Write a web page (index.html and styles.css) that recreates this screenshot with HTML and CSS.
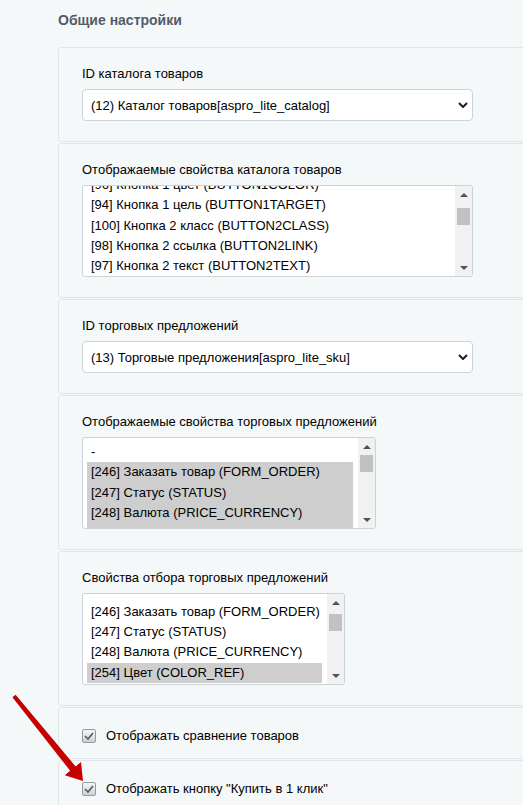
FILE: index.html
```html
<!DOCTYPE html>
<html lang="ru">
<head>
    <meta charset="UTF-8">
    <meta name="viewport" content="width=device-width, initial-scale=1.0">
    <title>Общие настройки</title>
    <link rel="stylesheet" href="styles.css">
</head>
<body>
    <div class="page">
        <h2 class="group-title">Общие настройки</h2>

        <!-- Catalog ID -->
        <div class="section">
            <div class="field-label">ID каталога товаров</div>
            <div class="select">
                <span>(12) Каталог товаров[aspro_lite_catalog]</span>
                <svg class="chevron" width="10" height="6" viewBox="0 0 10 6"><polyline points="1,1 5,5 9,1" /></svg>
            </div>
        </div>

        <!-- Catalog properties -->
        <div class="section">
            <div class="field-label">Отображаемые свойства каталога товаров</div>
            <div class="listbox wide">
                <div class="options">
                    <div class="rows scrolled-catalog">
                        <div class="opt">[96] Кнопка 1 цвет (BUTTON1COLOR)</div>
                        <div class="opt">[94] Кнопка 1 цель (BUTTON1TARGET)</div>
                        <div class="opt">[100] Кнопка 2 класс (BUTTON2CLASS)</div>
                        <div class="opt">[98] Кнопка 2 ссылка (BUTTON2LINK)</div>
                        <div class="opt">[97] Кнопка 2 текст (BUTTON2TEXT)</div>
                        <div class="opt">[99] Кнопка 2 цвет (BUTTON2COLOR)</div>
                    </div>
                </div>
                <div class="scrollbar">
                    <div class="sb-btn"><span class="tri-up"></span></div>
                    <div class="sb-track"><div class="sb-thumb thumb-catalog"></div></div>
                    <div class="sb-btn"><span class="tri-down"></span></div>
                </div>
            </div>
        </div>

        <!-- SKU ID -->
        <div class="section">
            <div class="field-label">ID торговых предложений</div>
            <div class="select">
                <span>(13) Торговые предложения[aspro_lite_sku]</span>
                <svg class="chevron" width="10" height="6" viewBox="0 0 10 6"><polyline points="1,1 5,5 9,1" /></svg>
            </div>
        </div>

        <!-- SKU properties -->
        <div class="section">
            <div class="field-label">Отображаемые свойства торговых предложений</div>
            <div class="listbox mid">
                <div class="options">
                    <div class="rows">
                        <div class="opt">-</div>
                        <div class="opt sel">[246] Заказать товар (FORM_ORDER)</div>
                        <div class="opt sel">[247] Статус (STATUS)</div>
                        <div class="opt sel">[248] Валюта (PRICE_CURRENCY)</div>
                        <div class="opt sel">[254] Цвет (COLOR_REF)</div>
                    </div>
                </div>
                <div class="scrollbar">
                    <div class="sb-btn"><span class="tri-up"></span></div>
                    <div class="sb-track"><div class="sb-thumb"></div></div>
                    <div class="sb-btn"><span class="tri-down"></span></div>
                </div>
            </div>
        </div>

        <!-- SKU filter properties -->
        <div class="section">
            <div class="field-label">Свойства отбора торговых предложений</div>
            <div class="listbox narrow">
                <div class="options">
                    <div class="rows scrolled-filter">
                        <div class="opt">&nbsp;</div>
                        <div class="opt">[246] Заказать товар (FORM_ORDER)</div>
                        <div class="opt">[247] Статус (STATUS)</div>
                        <div class="opt">[248] Валюта (PRICE_CURRENCY)</div>
                        <div class="opt sel">[254] Цвет (COLOR_REF)</div>
                    </div>
                </div>
                <div class="scrollbar">
                    <div class="sb-btn"><span class="tri-up"></span></div>
                    <div class="sb-track"><div class="sb-thumb thumb-filter"></div></div>
                    <div class="sb-btn"><span class="tri-down"></span></div>
                </div>
            </div>
        </div>

        <div class="section check-section">
            <label class="check-row"><span class="checkbox"><svg width="10" height="8" viewBox="0 0 10 8"><polyline points="1,4 4,7 9,1" /></svg></span>Отображать сравнение товаров</label>
        </div>

        <div class="section check-section">
            <label class="check-row"><span class="checkbox"><svg width="10" height="8" viewBox="0 0 10 8"><polyline points="1,4 4,7 9,1" /></svg></span>Отображать кнопку "Купить в 1 клик"</label>
        </div>
    </div>

    <!-- annotation arrow -->
    <svg class="annotation" width="523" height="805" viewBox="0 0 523 805">
        <polygon points="15.6,694.7 75.6,766.4 81,762 83,781 64.8,775.2 70.2,770.8 12.4,697.3" />
    </svg>
</body>
</html>
```

FILE: styles.css
```css
html, body {
    margin: 0;
    height: 100%;
    overflow: hidden;
}
body {
    font-family: "Liberation Sans", Arial, sans-serif;
    font-size: 13px;
    color: #000;
    background: #f5f8f9;
    position: relative;
}
.page {
    padding: 12px 0 0 58px;
}
.group-title {
    margin: 0 0 19px;
    font-size: 14px;
    line-height: 16px;
    font-weight: bold;
    color: #535c69;
}
.section {
    width: 500px;
    box-sizing: border-box;
    border: 1px solid #dfe6ea;
    border-radius: 3px;
    padding: 18px 0 20px 23px;
    margin-bottom: 1px;
    background: #f5f8f9;
}
.field-label {
    line-height: 16px;
    margin-bottom: 7px;
}
.select {
    width: 391px;
    height: 32px;
    box-sizing: border-box;
    border: 1px solid #cad3d9;
    border-radius: 4px;
    background: #fff;
    display: flex;
    align-items: center;
    justify-content: space-between;
    padding: 0 4px 0 8px;
}
.chevron polyline {
    fill: none;
    stroke: #1e1e1e;
    stroke-width: 2;
}
.listbox {
    height: 92px;
    box-sizing: border-box;
    border: 1px solid #cad3d9;
    border-radius: 3px;
    background: #fff;
    display: flex;
    overflow: hidden;
}
.listbox.wide { width: 391px; }
.listbox.mid { width: 294px; }
.listbox.narrow { width: 263px; }
.options {
    flex: 1;
    overflow: hidden;
    padding: 0 5px 0 4px;
}
.rows {
    margin-top: 4px;
}
.scrolled-catalog { margin-top: -11px; }
.scrolled-filter { margin-top: -12.5px; }
.opt {
    height: 20.3px;
    line-height: 20.3px;
    padding: 0 4px;
    white-space: nowrap;
}
.opt.sel {
    background: #cecece;
}
.scrollbar {
    width: 17px;
    background: #f1f1f1;
    display: flex;
    flex-direction: column;
}
.sb-btn {
    height: 17px;
    display: flex;
    align-items: center;
    justify-content: center;
}
.tri-up, .tri-down {
    width: 0;
    height: 0;
    border-left: 4px solid transparent;
    border-right: 4px solid transparent;
}
.tri-up { border-bottom: 4px solid #505050; }
.tri-down { border-top: 4px solid #505050; }
.sb-track {
    flex: 1;
    padding: 0 2px;
}
.sb-thumb {
    height: 17px;
    background: #c1c1c1;
}
.thumb-catalog { margin-top: 5px; }
.thumb-filter { margin-top: 3px; }
.check-section {
    padding: 20px 0 14px 23px;
}
.check-row {
    display: flex;
    align-items: center;
    line-height: 16px;
}
.checkbox {
    width: 14px;
    height: 14px;
    box-sizing: border-box;
    border: 1px solid #959ca1;
    border-radius: 2px;
    background: linear-gradient(#f4f5f6, #cdd1d4);
    margin-right: 10px;
    display: flex;
    align-items: center;
    justify-content: center;
}
.checkbox polyline {
    fill: none;
    stroke: #55595d;
    stroke-width: 1.6;
}
.annotation {
    position: absolute;
    top: 0;
    left: 0;
    pointer-events: none;
}
.annotation polygon {
    fill: #c40000;
}
```
